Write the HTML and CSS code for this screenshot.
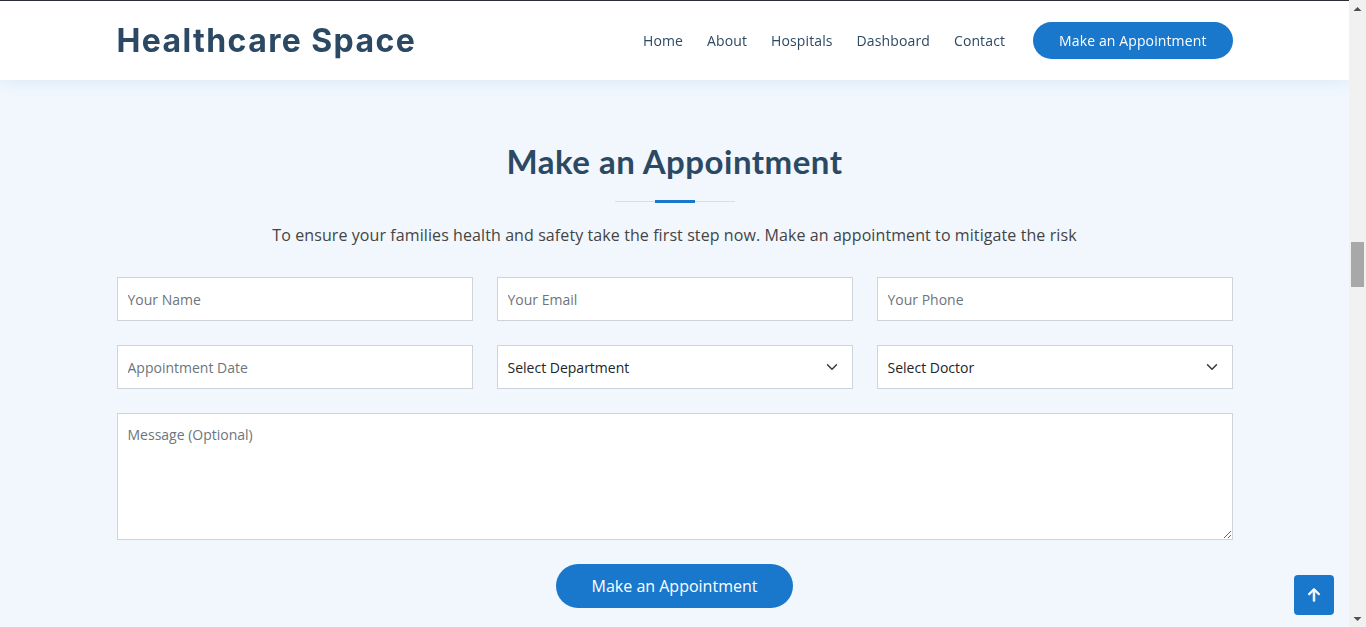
FILE: index.html
```html
<!DOCTYPE html>
<html lang="en">
<head>
<meta charset="utf-8">
<title>Healthcare Space - Make an Appointment</title>
<link rel="stylesheet" href="styles.css">
</head>
<body>
<header class="site-header">
  <div class="container header-inner">
    <a class="logo" href="#">Healthcare Space</a>
    <nav class="nav">
      <a href="#">Home</a>
      <a href="#">About</a>
      <a href="#">Hospitals</a>
      <a href="#">Dashboard</a>
      <a href="#">Contact</a>
      <a class="appointment-btn" href="#">Make an Appointment</a>
    </nav>
  </div>
</header>

<main class="main">
  <section class="appointment">
    <div class="container">
      <div class="section-title">
        <h2>Make an Appointment</h2>
        <p>To ensure your families health and safety take the first step now. Make an appointment to mitigate the risk</p>
      </div>
      <form class="appt-form">
        <div class="row">
          <input class="field" type="text" placeholder="Your Name">
          <input class="field" type="text" placeholder="Your Email">
          <input class="field" type="text" placeholder="Your Phone">
        </div>
        <div class="row">
          <input class="field" type="text" placeholder="Appointment Date">
          <select class="field select">
            <option>Select Department</option>
          </select>
          <select class="field select">
            <option>Select Doctor</option>
          </select>
        </div>
        <textarea class="field message" rows="5" placeholder="Message (Optional)"></textarea>
        <div class="submit-wrap">
          <button type="button" class="submit-btn">Make an Appointment</button>
        </div>
      </form>
    </div>
  </section>
</main>

<a href="#" class="back-to-top" aria-label="Back to top">
  <svg width="26" height="26" viewBox="0 0 16 16" fill="#ffffff"><path fill-rule="evenodd" d="M8 12a.5.5 0 0 0 .5-.5V5.707l2.146 2.147a.5.5 0 0 0 .708-.708l-3-3a.5.5 0 0 0-.708 0l-3 3a.5.5 0 1 0 .708.708L7.5 5.707V11.5a.5.5 0 0 0 .5.5z" stroke="#ffffff" stroke-width="0.5"/></svg>
</a>

<div class="scrollbar" aria-hidden="true">
  <div class="sb-btn">
    <svg width="17" height="17" viewBox="0 0 17 17"><polygon fill="#505050" points="4.5,11 12.5,11 8.5,7"/></svg>
  </div>
  <div class="sb-track">
    <div class="sb-thumb"></div>
  </div>
  <div class="sb-btn">
    <svg width="17" height="17" viewBox="0 0 17 17"><polygon fill="#505050" points="4.5,7 12.5,7 8.5,11"/></svg>
  </div>
</div>
</body>
</html>
```

FILE: styles.css
```css
* {
  box-sizing: border-box;
}
html,
body {
  height: 100%;
}
body {
  margin: 0;
  padding-right: 17px;
  overflow: hidden;
  font-family: "Open Sans", "Liberation Sans", sans-serif;
  color: #444444;
  background: #f1f7fd;
}
a {
  text-decoration: none;
}
.container {
  width: 1116px;
  margin: 0 auto;
}

/* Header */
.site-header {
  position: fixed;
  top: 0;
  left: 0;
  right: 17px;
  height: 80px;
  background: #ffffff;
  border-top: 1px solid #2a2e38;
  box-shadow: 0 2px 15px rgba(25, 119, 204, 0.1);
  z-index: 10;
}
.header-inner {
  height: 100%;
  display: flex;
  align-items: center;
  justify-content: space-between;
}
.logo {
  font-family: "Inter", "Liberation Sans", sans-serif;
  font-weight: 700;
  font-size: 32px;
  color: #2c4964;
  letter-spacing: 1.4px;
  line-height: 1;
  margin-top: 1px;
}
.nav {
  display: flex;
  align-items: center;
  gap: 24px;
  margin-top: -1px;
}
.nav a {
  font-size: 14px;
  color: #2c4964;
  line-height: 21px;
  letter-spacing: 0.12px;
}
.nav .appointment-btn {
  margin-left: 4px;
  background: #1977cc;
  color: #ffffff;
  border-radius: 50px;
  padding: 8px 26px;
}

/* Main */
.main {
  padding-top: 80px;
}

/* Appointment section */
.appointment {
  padding: 62px 0 60px;
  background: #f1f7fd;
}
.section-title {
  text-align: center;
}
.section-title h2 {
  font-family: "Lato", "Liberation Sans", sans-serif;
  font-weight: 700;
  font-size: 33px;
  line-height: 38px;
  letter-spacing: 0.5px;
  color: #2c4964;
  margin: 0 0 20px;
  padding-bottom: 23px;
  position: relative;
}
.section-title h2::before {
  content: "";
  position: absolute;
  width: 120px;
  height: 1px;
  background: #dddddd;
  bottom: 1px;
  left: calc(50% - 60px);
}
.section-title h2::after {
  content: "";
  position: absolute;
  width: 40px;
  height: 3px;
  background: #1977cc;
  bottom: 0;
  left: calc(50% - 20px);
}
.section-title p {
  margin: 0 0 30px;
  font-size: 16px;
  line-height: 24px;
  letter-spacing: 0.09px;
  color: #444444;
}

/* Form */
.appt-form {
  display: flex;
  flex-direction: column;
  gap: 24px;
}
.row {
  display: grid;
  grid-template-columns: repeat(3, 1fr);
  gap: 24px;
}
.field {
  height: 44px;
  border: 1px solid #ced4da;
  border-radius: 0;
  background: #ffffff;
  padding: 10px;
  font-family: "Open Sans", "Liberation Sans", sans-serif;
  font-size: 14px;
  line-height: 21px;
  color: #212529;
  outline: none;
  margin: 0;
}
.field::placeholder {
  color: #6c757d;
  opacity: 1;
}
.select {
  appearance: none;
  -webkit-appearance: none;
  background-image: url("data:image/svg+xml,%3csvg xmlns='http://www.w3.org/2000/svg' viewBox='0 0 16 16'%3e%3cpath fill='none' stroke='%23343a40' stroke-linecap='round' stroke-linejoin='round' stroke-width='2' d='m2 5 6 6 6-6'/%3e%3c/svg%3e");
  background-repeat: no-repeat;
  background-position: right 12px center;
  background-size: 16px 12px;
  padding-right: 36px;
}
.message {
  height: 127px;
  width: 100%;
  resize: vertical;
  display: block;
}
.submit-wrap {
  display: flex;
  justify-content: center;
}
.submit-btn {
  background: #1977cc;
  color: #ffffff;
  border: 0;
  border-radius: 50px;
  padding: 10px 36px;
  font-family: "Open Sans", "Liberation Sans", sans-serif;
  font-size: 16px;
  line-height: 24px;
  cursor: pointer;
}

/* Back to top */
.back-to-top {
  position: fixed;
  right: 32px;
  bottom: 12px;
  width: 40px;
  height: 40px;
  border-radius: 4px;
  background: #1977cc;
  display: flex;
  align-items: center;
  justify-content: center;
  z-index: 20;
}

/* Browser scrollbar (window chrome) */
.scrollbar {
  position: fixed;
  top: 0;
  right: 0;
  width: 17px;
  height: 100vh;
  background: #f1f1f1;
  display: flex;
  flex-direction: column;
  z-index: 30;
}
.sb-btn {
  height: 17px;
  flex: none;
}
.sb-btn svg {
  display: block;
}
.sb-track {
  flex: 1;
  padding: 225px 2px 0;
}
.sb-thumb {
  height: 45px;
  background: #a8a8a8;
}
```
